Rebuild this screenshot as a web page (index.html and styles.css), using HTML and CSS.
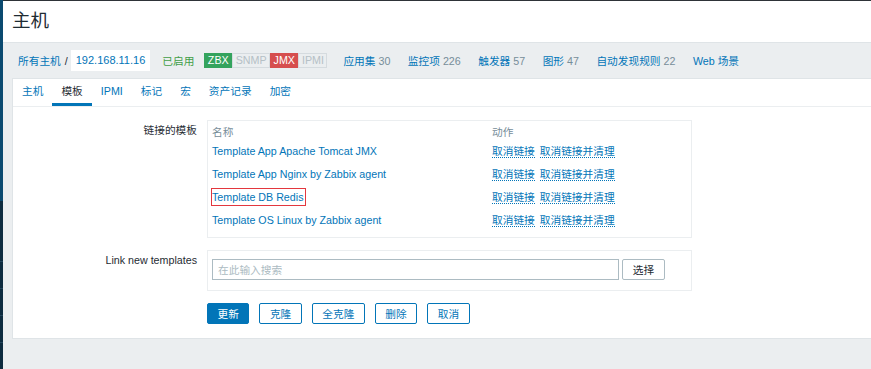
FILE: index.html
```html
<!DOCTYPE html>
<html lang="zh">
<head>
    <meta charset="UTF-8">
    <title>主机</title>
    <link rel="stylesheet" href="styles.css">
</head>
<body>
<div class="page">
    <div class="sidebar">
        <div class="sidebar-top"></div>
        <div class="sidebar-bottom">
            <i></i><i></i><i></i><i></i>
        </div>
    </div>
    <div class="main">
        <header class="header">
            <h1>主机</h1>
        </header>
        <nav class="host-nav">
            <a class="crumb" href="#">所有主机</a>
            <span class="crumb-sep">/</span>
            <span class="crumb-current">192.168.11.16</span>
            <span class="status-on">已启用</span>
            <span class="badges">
                <span class="badge badge-on">ZBX</span><span class="badge">SNMP</span><span class="badge badge-err">JMX</span><span class="badge">IPMI</span>
            </span>
            <a class="nav-link" href="#">应用集 <span class="count">30</span></a>
            <a class="nav-link" href="#">监控项 <span class="count">226</span></a>
            <a class="nav-link" href="#">触发器 <span class="count">57</span></a>
            <a class="nav-link" href="#">图形 <span class="count">47</span></a>
            <a class="nav-link" href="#">自动发现规则 <span class="count">22</span></a>
            <a class="nav-link" href="#">Web 场景</a>
        </nav>
        <div class="content">
            <ul class="tabs">
                <li><a href="#">主机</a></li>
                <li class="active"><a href="#">模板</a></li>
                <li><a href="#">IPMI</a></li>
                <li><a href="#">标记</a></li>
                <li><a href="#">宏</a></li>
                <li><a href="#">资产记录</a></li>
                <li><a href="#">加密</a></li>
            </ul>
            <form class="form">
                <div class="form-row">
                    <label class="form-label">链接的模板</label>
                    <div class="form-box box-templates">
                        <table class="template-list">
                            <tr>
                                <th class="col-name">名称</th>
                                <th>动作</th>
                            </tr>
                            <tr>
                                <td><a href="#">Template App Apache Tomcat JMX</a></td>
                                <td><a class="action-link" href="#">取消链接</a><a class="action-link" href="#">取消链接并清理</a></td>
                            </tr>
                            <tr>
                                <td><a href="#">Template App Nginx by Zabbix agent</a></td>
                                <td><a class="action-link" href="#">取消链接</a><a class="action-link" href="#">取消链接并清理</a></td>
                            </tr>
                            <tr>
                                <td><a class="marked" href="#">Template DB Redis</a></td>
                                <td><a class="action-link" href="#">取消链接</a><a class="action-link" href="#">取消链接并清理</a></td>
                            </tr>
                            <tr>
                                <td><a href="#">Template OS Linux by Zabbix agent</a></td>
                                <td><a class="action-link" href="#">取消链接</a><a class="action-link" href="#">取消链接并清理</a></td>
                            </tr>
                        </table>
                    </div>
                </div>
                <div class="form-row">
                    <label class="form-label">Link new templates</label>
                    <div class="form-box box-new">
                        <input class="search-input" type="text" placeholder="在此输入搜索">
                        <button class="select-btn" type="button">选择</button>
                    </div>
                </div>
                <div class="form-row">
                    <div></div>
                    <div class="form-actions">
                        <button class="btn btn-main" type="button">更新</button>
                        <button class="btn" type="button">克隆</button>
                        <button class="btn" type="button">全克隆</button>
                        <button class="btn" type="button">删除</button>
                        <button class="btn" type="button">取消</button>
                    </div>
                </div>
            </form>
        </div>
    </div>
</div>
</body>
</html>
```

FILE: styles.css
```css
html, body {
    margin: 0;
    height: 100%;
}

body {
    background: #ebeef0;
    color: #1f2c33;
    font-family: "Liberation Sans", "Noto Sans CJK SC", sans-serif;
    font-size: 10.7px;
}

a {
    color: #0275b8;
    text-decoration: none;
}

.page {
    display: flex;
    height: 100vh;
}

.sidebar {
    width: 3px;
    flex: none;
    display: flex;
    flex-direction: column;
}

.sidebar-top {
    height: 205px;
    background: #0b4a70;
}

.sidebar-bottom {
    flex: 1;
    background: #0d2b3f;
    padding-top: 60px;
}

.sidebar-bottom i {
    display: block;
    height: 1px;
    margin-bottom: 26px;
    background: #24465c;
}

.main {
    flex: 1;
    min-width: 0;
}

.header {
    height: 41px;
    background: #fff;
    border-top: 1px solid #2e3338;
    border-bottom: 1px solid #dfe4e7;
}

.header h1 {
    margin: 0;
    padding-left: 9px;
    font-size: 18.5px;
    font-weight: normal;
    line-height: 40px;
}

.host-nav {
    display: flex;
    align-items: center;
    height: 35px;
    padding-left: 15px;
    white-space: nowrap;
}

.crumb-sep {
    margin: 0 3px 0 4px;
    color: #1f2c33;
}

.crumb-current {
    padding: 0 5px;
    line-height: 21px;
    background: #fff;
    color: #0275b8;
    font-size: 11px;
}

.status-on {
    margin-left: 12px;
    color: #429e47;
}

.badges {
    display: flex;
    margin-left: 10px;
}

.badge {
    padding: 0 2.5px;
    line-height: 13px;
    border: 1px solid #d5dbdf;
    color: #b5c0c6;
}

.badge-on {
    background: #34a35d;
    border-color: #34a35d;
    color: #fff;
}

.badge-err {
    background: #d64e4e;
    border-color: #d64e4e;
    color: #fff;
}

.nav-link {
    margin-left: 17.5px;
}

.badges + .nav-link {
    margin-left: 16px;
}

.count {
    color: #768d99;
}

.content {
    height: 259px;
    margin-left: 9px;
    background: #fff;
    border: 1px solid #dfe4e7;
    border-right: none;
}

.tabs {
    display: flex;
    margin: 0;
    padding: 0;
    list-style: none;
    border-bottom: 1px solid #ebeef0;
}

.tabs a {
    display: block;
    padding: 0 9px;
    line-height: 24px;
    border-bottom: 3px solid transparent;
}

.tabs .active a {
    color: #1f2c33;
    border-bottom-color: #0275b8;
}

.form {
    padding-top: 13px;
}

.form-row {
    display: grid;
    grid-template-columns: 184px 485px;
    column-gap: 10px;
}

.form-row + .form-row {
    margin-top: 12px;
}

.form-label {
    padding-top: 4px;
    line-height: 13px;
    text-align: right;
}

.form-box {
    border: 1px solid #ebeef0;
}

.box-templates {
    padding: 3px 4px 6px;
}

.template-list {
    border-collapse: collapse;
    width: 100%;
}

.template-list th {
    height: 15px;
    padding: 0;
    color: #768d99;
    font-weight: normal;
    text-align: left;
}

.template-list td {
    height: 23px;
    padding: 0;
    white-space: nowrap;
}

.col-name {
    width: 280px;
}

.marked {
    padding: 2px 2px 2px 0;
    outline: 1px solid #e3373e;
}

.action-link {
    margin-right: 5px;
    border-bottom: 1px dotted #0275b8;
}

.box-new {
    display: flex;
    padding: 8px 4px 10px;
}

.search-input {
    box-sizing: border-box;
    width: 407px;
    height: 21px;
    padding: 0 5px;
    border: 1px solid #acbbc2;
    font: inherit;
    color: #1f2c33;
}

.search-input::placeholder {
    color: #acbbc2;
}

.select-btn {
    box-sizing: border-box;
    width: 43px;
    height: 21px;
    margin-left: 3px;
    padding: 0;
    border: 1px solid #acbbc2;
    border-radius: 2px;
    background: #fff;
    color: #1f2c33;
    font: inherit;
}

.form-actions {
    display: flex;
    gap: 10px;
}

.btn {
    box-sizing: border-box;
    height: 21px;
    padding: 0 9.5px;
    border: 1px solid #0275b8;
    border-radius: 2px;
    background: #fff;
    color: #0275b8;
    font: inherit;
}

.btn-main {
    background: #0275b8;
    color: #fff;
}
```
